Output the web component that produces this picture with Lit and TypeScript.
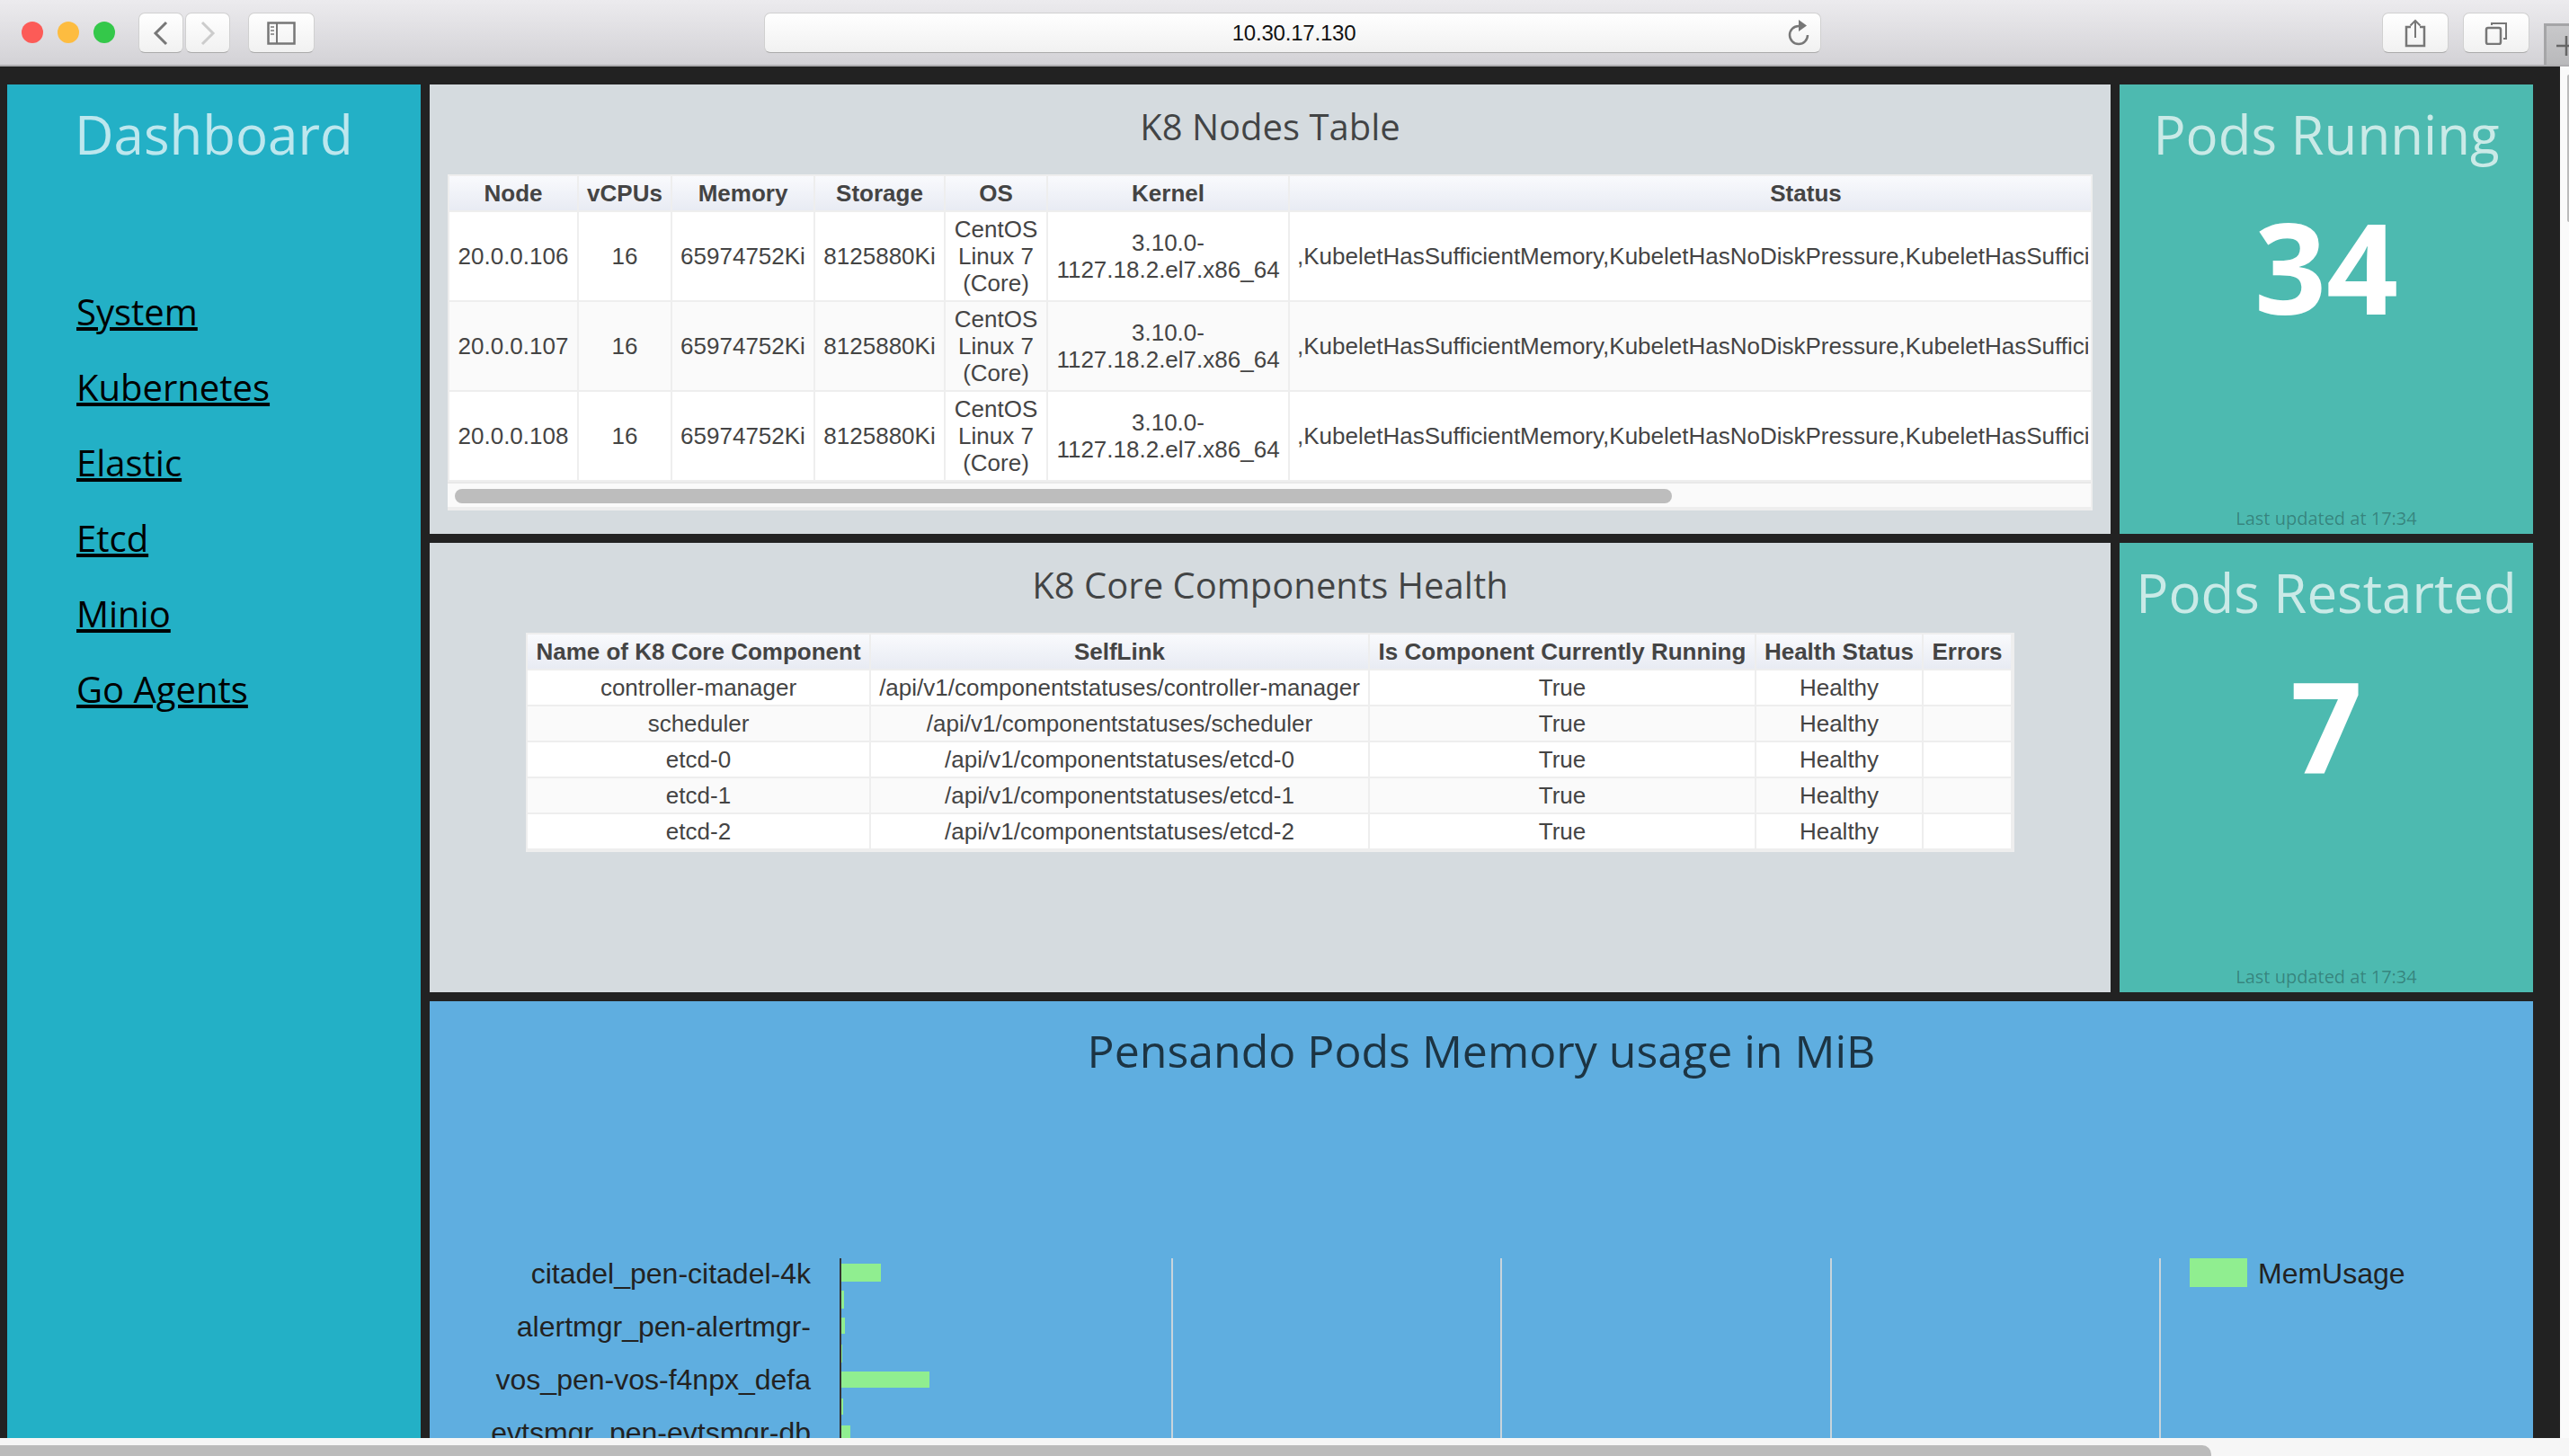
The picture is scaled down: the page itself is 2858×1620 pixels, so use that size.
import { LitElement, html, svg, css } from "lit";
import { customElement } from "lit/decorators.js";

const nodes = ["20.0.0.106", "20.0.0.107", "20.0.0.108"];
const statusText =
  ",KubeletHasSufficientMemory,KubeletHasNoDiskPressure,KubeletHasSufficientPID,KubeletReady";
const components = ["controller-manager", "scheduler", "etcd-0", "etcd-1", "etcd-2"];
const links = ["System", "Kubernetes", "Elastic", "Etcd", "Minio", "Go Agents"];

// every bar of the chart: top (from the plot top), width and height in px
const bars = [
  [6, 44, 20],
  [36, 3, 20],
  [66, 4, 18],
  [96, 1, 20],
  [126, 98, 18],
  [156, 2, 18],
  [186, 10, 20],
];
const labels: [string, number][] = [
  ["citadel_pen-citadel-4k", 28],
  ["alertmgr_pen-alertmgr-", 87],
  ["vos_pen-vos-f4npx_defa", 146],
  ["evtsmgr_pen-evtsmgr-db", 205],
];
const grid = [825, 1191, 1558, 1924];

@customElement("app-root")
export class AppRoot extends LitElement {
  static styles = css`
    :host {
      display: block;
      width: 2858px;
      height: 1620px;
      overflow: hidden;
      position: relative;
      font-family: "Liberation Sans", Arial, sans-serif;
      background: #222;
    }

    .chrome {
      display: flex;
      align-items: flex-start;
      box-sizing: border-box;
      height: 74px;
      padding: 14px 0 0 24px;
      background: linear-gradient(#ecebee, #d3d2d6);
      border-bottom: 2px solid #aeadb0;
    }
    .lights {
      display: flex;
      gap: 16px;
      margin-top: 10px;
      margin-right: 26px;
    }
    .light {
      width: 24px;
      height: 24px;
      border-radius: 50%;
    }
    .red { background: #fc5b57; }
    .amber { background: #fdbc40; }
    .green { background: #34c84a; }

    .btn {
      box-sizing: border-box;
      display: flex;
      align-items: center;
      justify-content: center;
      height: 45px;
      background: linear-gradient(#ffffff, #f1f1f1);
      border: 1px solid #d0d0d0;
      border-bottom-color: #aaa;
      border-radius: 7px;
    }
    .btn svg { display: block; }
    .nav { width: 50px; }
    .nav + .nav { margin-left: 2px; }
    .side { width: 74px; margin-left: 20px; }
    .address {
      box-sizing: border-box;
      position: relative;
      width: 1176px;
      margin-left: 500px;
      padding-left: 3px;
      font-size: 24px;
      color: #111;
      letter-spacing: -0.2px;
    }
    .reload {
      position: absolute;
      right: 10px;
      top: 5px;
    }
    .share { width: 74px; margin-left: 624px; }
    .tabs { width: 74px; margin-left: 16px; }
    .newtab {
      box-sizing: border-box;
      width: 28px;
      height: 46px;
      margin: 12px 0 0 16px;
      background: linear-gradient(#c8c8ca, #b9b9bb);
      border: solid #a5a5a7;
      border-width: 3px 0 0 3px;
      overflow: hidden;
    }

    .page {
      display: flex;
      height: 1526px;
    }
    .board {
      box-sizing: border-box;
      width: 2848px;
      height: 1526px;
      padding: 20px 30px 0 8px;
      display: grid;
      grid-template-columns: 460px 1870px 460px;
      grid-template-rows: 500px 500px 486px;
      gap: 10px;
    }
    .vtrack {
      width: 10px;
      background: #fafafa;
      position: relative;
    }
    .vthumb {
      position: absolute;
      right: 0;
      top: 9px;
      width: 2px;
      height: 164px;
      background: #bbb;
      border-radius: 2px 0 0 2px;
    }
    .htrack {
      height: 20px;
      box-sizing: border-box;
      padding-top: 8px;
      background: #f6f6f6;
    }
    .hthumb {
      width: 2460px;
      height: 12px;
      background: #bbb;
      border-radius: 0 10px 0 0;
    }

    .sidebar, .stat, .panel, .chart {
      font-family: "Open Sans", sans-serif;
    }
    .sidebar {
      grid-row: 1 / span 3;
      background: #23b0c6;
      box-sizing: border-box;
      padding: 15px 0 0 75px;
    }
    .big {
      margin: 0;
      font-size: 60px;
      line-height: 80px;
      font-weight: 400;
      color: rgba(255, 255, 255, 0.7);
      white-space: nowrap;
    }
    .sidebar nav {
      display: flex;
      flex-direction: column;
      align-items: flex-start;
      margin: 116px 0 0 2px;
    }
    .sidebar a {
      font-size: 40px;
      line-height: 84px;
      color: #000;
      text-decoration: underline;
    }

    .stat {
      background: #4dbab0;
      box-sizing: border-box;
      display: flex;
      flex-direction: column;
      align-items: center;
      padding: 15px 0 4px;
    }
    .stat .num {
      margin-top: 27px;
      font-size: 140px;
      line-height: 160px;
      font-weight: 700;
      color: #fff;
    }
    .stat .updated {
      margin-top: auto;
      font-size: 20px;
      line-height: 27px;
      color: rgba(0, 0, 0, 0.3);
    }

    .panel {
      background: #d5dbdf;
      display: flex;
      flex-direction: column;
      align-items: center;
      padding-top: 20px;
    }
    .panel h2 {
      margin: 0 0 26px;
      font-size: 40px;
      line-height: 54px;
      font-weight: 400;
      color: rgba(0, 0, 0, 0.7);
    }

    .grid {
      background: #eeeeee;
      font-family: "Liberation Sans", Arial, sans-serif;
    }
    .grid.pad {
      padding: 0 2px 2px 0;
    }
    .grid.wide {
      box-sizing: border-box;
      width: 1830px;
      border-right: 2px solid #eeeeee;
      overflow: hidden;
    }
    table {
      border-collapse: separate;
      border-spacing: 2px;
      table-layout: fixed;
      font-size: 26px;
      line-height: 30px;
      color: #444;
    }
    th, td {
      padding: 4px 8px;
      text-align: center;
      background: #fff;
      overflow: hidden;
    }
    th {
      font-weight: 700;
      white-space: nowrap;
      background: linear-gradient(#f9fafd, #e8ebf3);
    }
    tr:nth-child(even) td { background: #fafafa; }
    td.status {
      text-align: left;
    }
    td.status div {
      width: 880px;
      overflow: hidden;
      white-space: nowrap;
    }
    .scroll {
      box-sizing: border-box;
      height: 32px;
      border-top: 2px solid #e8e8e8;
      border-bottom: 4px solid #eeeeee;
      background: #fafafa;
      padding: 6px 0 0 8px;
    }
    .scroll div {
      width: 1354px;
      height: 16px;
      border-radius: 8px;
      background: #bdbdbd;
    }

    .chart {
      grid-column: 2 / span 2;
      background: #5faee0;
      overflow: hidden;
    }
    .chart h2 {
      margin: 0;
      padding-top: 20px;
      text-align: center;
      font-size: 50px;
      line-height: 70px;
      font-weight: 400;
      color: rgba(0, 0, 0, 0.7);
    }
    .chart svg {
      display: block;
      margin-top: 196px;
      font-family: "Liberation Sans", Arial, sans-serif;
      font-size: 32px;
      fill: #222;
    }
  `;

  render() {
    return html`
      <div class="chrome">
        <div class="lights">
          <div class="light red"></div>
          <div class="light amber"></div>
          <div class="light green"></div>
        </div>
        <div class="btn nav">
          <svg width="18" height="28" viewBox="0 0 18 28"><path d="M15 2 3 14l12 12" fill="none" stroke="#777" stroke-width="3"/></svg>
        </div>
        <div class="btn nav">
          <svg width="18" height="28" viewBox="0 0 18 28"><path d="M3 2l12 12L3 26" fill="none" stroke="#ccc" stroke-width="3"/></svg>
        </div>
        <div class="btn side">
          <svg width="32" height="26" viewBox="0 0 32 26">
            <rect x="1.5" y="1.5" width="29" height="23" fill="none" stroke="#777" stroke-width="2.5"/>
            <path d="M11 2v22" stroke="#777" stroke-width="2"/>
            <path d="M4 6h4M4 10h4M4 14h4" stroke="#999" stroke-width="2"/>
          </svg>
        </div>
        <div class="btn address">
          10.30.17.130
          <svg class="reload" width="28" height="32" viewBox="0 0 28 32">
            <path d="M14 9a10 10 0 1 0 10 10" fill="none" stroke="#777" stroke-width="2.5"/>
            <path d="M14 2l9 6.500-9 6.500z" fill="#777"/>
          </svg>
        </div>
        <div class="btn share">
          <svg width="24" height="32" viewBox="0 0 24 32">
            <path d="M7 9H2v21h20V9h-5" fill="none" stroke="#777" stroke-width="2.5"/>
            <path d="M12 21V2M6.500 7.500 12 2l5.500 5.500" fill="none" stroke="#777" stroke-width="2"/>
          </svg>
        </div>
        <div class="btn tabs">
          <svg width="26" height="26" viewBox="0 0 26 26">
            <rect x="2" y="7" width="16" height="18" rx="2" fill="none" stroke="#777" stroke-width="2.5"/>
            <path d="M8 4V2h16v17h-3" fill="none" stroke="#777" stroke-width="2"/>
          </svg>
        </div>
        <div class="newtab">
          <svg width="25" height="43" viewBox="0 0 25 43"><path d="M11 22h14M22 11v22" stroke="#666" stroke-width="2.500"/></svg>
        </div>
      </div>

      <div class="page">
        <div class="board">
          <aside class="sidebar">
            <h1 class="big">Dashboard</h1>
            <nav>${links.map((l) => html`<a href="#">${l}</a>`)}</nav>
          </aside>

          <section class="panel">
            <h2>K8 Nodes Table</h2>
            ${this.nodesTable()}
          </section>

          <section class="stat">
            <h1 class="big">Pods Running</h1>
            <div class="num">34</div>
            <div class="updated">Last updated at 17:34</div>
          </section>

          <section class="panel">
            <h2>K8 Core Components Health</h2>
            ${this.healthTable()}
          </section>

          <section class="stat">
            <h1 class="big">Pods Restarted</h1>
            <div class="num">7</div>
            <div class="updated">Last updated at 17:34</div>
          </section>

          <section class="chart">
            <h2>Pensando Pods Memory usage in MiB</h2>
            ${this.memoryChart()}
          </section>
        </div>
        <div class="vtrack"><div class="vthumb"></div></div>
      </div>
      <div class="htrack"><div class="hthumb"></div></div>
    `;
  }

  nodesTable() {
    // the status column is wider than the box, the rest sits behind the scrollbar
    return html`
      <div class="grid wide">
        <table style="width:2087px">
          <colgroup>
            <col style="width:142px" /><col style="width:102px" /><col style="width:157px" />
            <col style="width:143px" /><col style="width:112px" /><col style="width:267px" />
            <col style="width:1148px" />
          </colgroup>
          <thead>
            <tr>
              <th>Node</th><th>vCPUs</th><th>Memory</th><th>Storage</th><th>OS</th><th>Kernel</th><th>Status</th>
            </tr>
          </thead>
          <tbody>
            ${nodes.map(
              (n) => html`
                <tr>
                  <td>${n}</td>
                  <td>16</td>
                  <td>65974752Ki</td>
                  <td>8125880Ki</td>
                  <td>CentOS<br />Linux 7<br />(Core)</td>
                  <td>3.10.0-<br />1127.18.2.el7.x86_64</td>
                  <td class="status"><div>${statusText}</div></td>
                </tr>
              `
            )}
          </tbody>
        </table>
        <div class="scroll"><div></div></div>
      </div>
    `;
  }

  healthTable() {
    return html`
      <div class="grid pad">
        <table style="width:1654px">
          <colgroup>
            <col style="width:380px" /><col style="width:553px" /><col style="width:428px" />
            <col style="width:184px" /><col style="width:97px" />
          </colgroup>
          <thead>
            <tr>
              <th>Name of K8 Core Component</th><th>SelfLink</th>
              <th>Is Component Currently Running</th><th>Health Status</th><th>Errors</th>
            </tr>
          </thead>
          <tbody>
            ${components.map(
              (c) => html`
                <tr>
                  <td>${c}</td>
                  <td>/api/v1/componentstatuses/${c}</td>
                  <td>True</td>
                  <td>Healthy</td>
                  <td></td>
                </tr>
              `
            )}
          </tbody>
        </table>
      </div>
    `;
  }

  memoryChart() {
    return html`
      <svg width="2340" height="200" viewBox="0 0 2340 200">
        ${grid.map((x) => svg`<rect x=${x} y="0" width="2" height="200" fill="#c8d4dc"></rect>`)}
        ${bars.map(([y, w, h]) => svg`<rect x="458" y=${y} width=${w} height=${h} fill="#90ee90"></rect>`)}
        <rect x="456" y="0" width="2" height="200" fill="#333"></rect>
        ${labels.map(([t, y]) => svg`<text x="424" y=${y} text-anchor="end">${t}</text>`)}
        <rect x="1958" y="0" width="64" height="32" fill="#90ee90"></rect>
        <text x="2034" y="28">MemUsage</text>
      </svg>
    `;
  }
}
